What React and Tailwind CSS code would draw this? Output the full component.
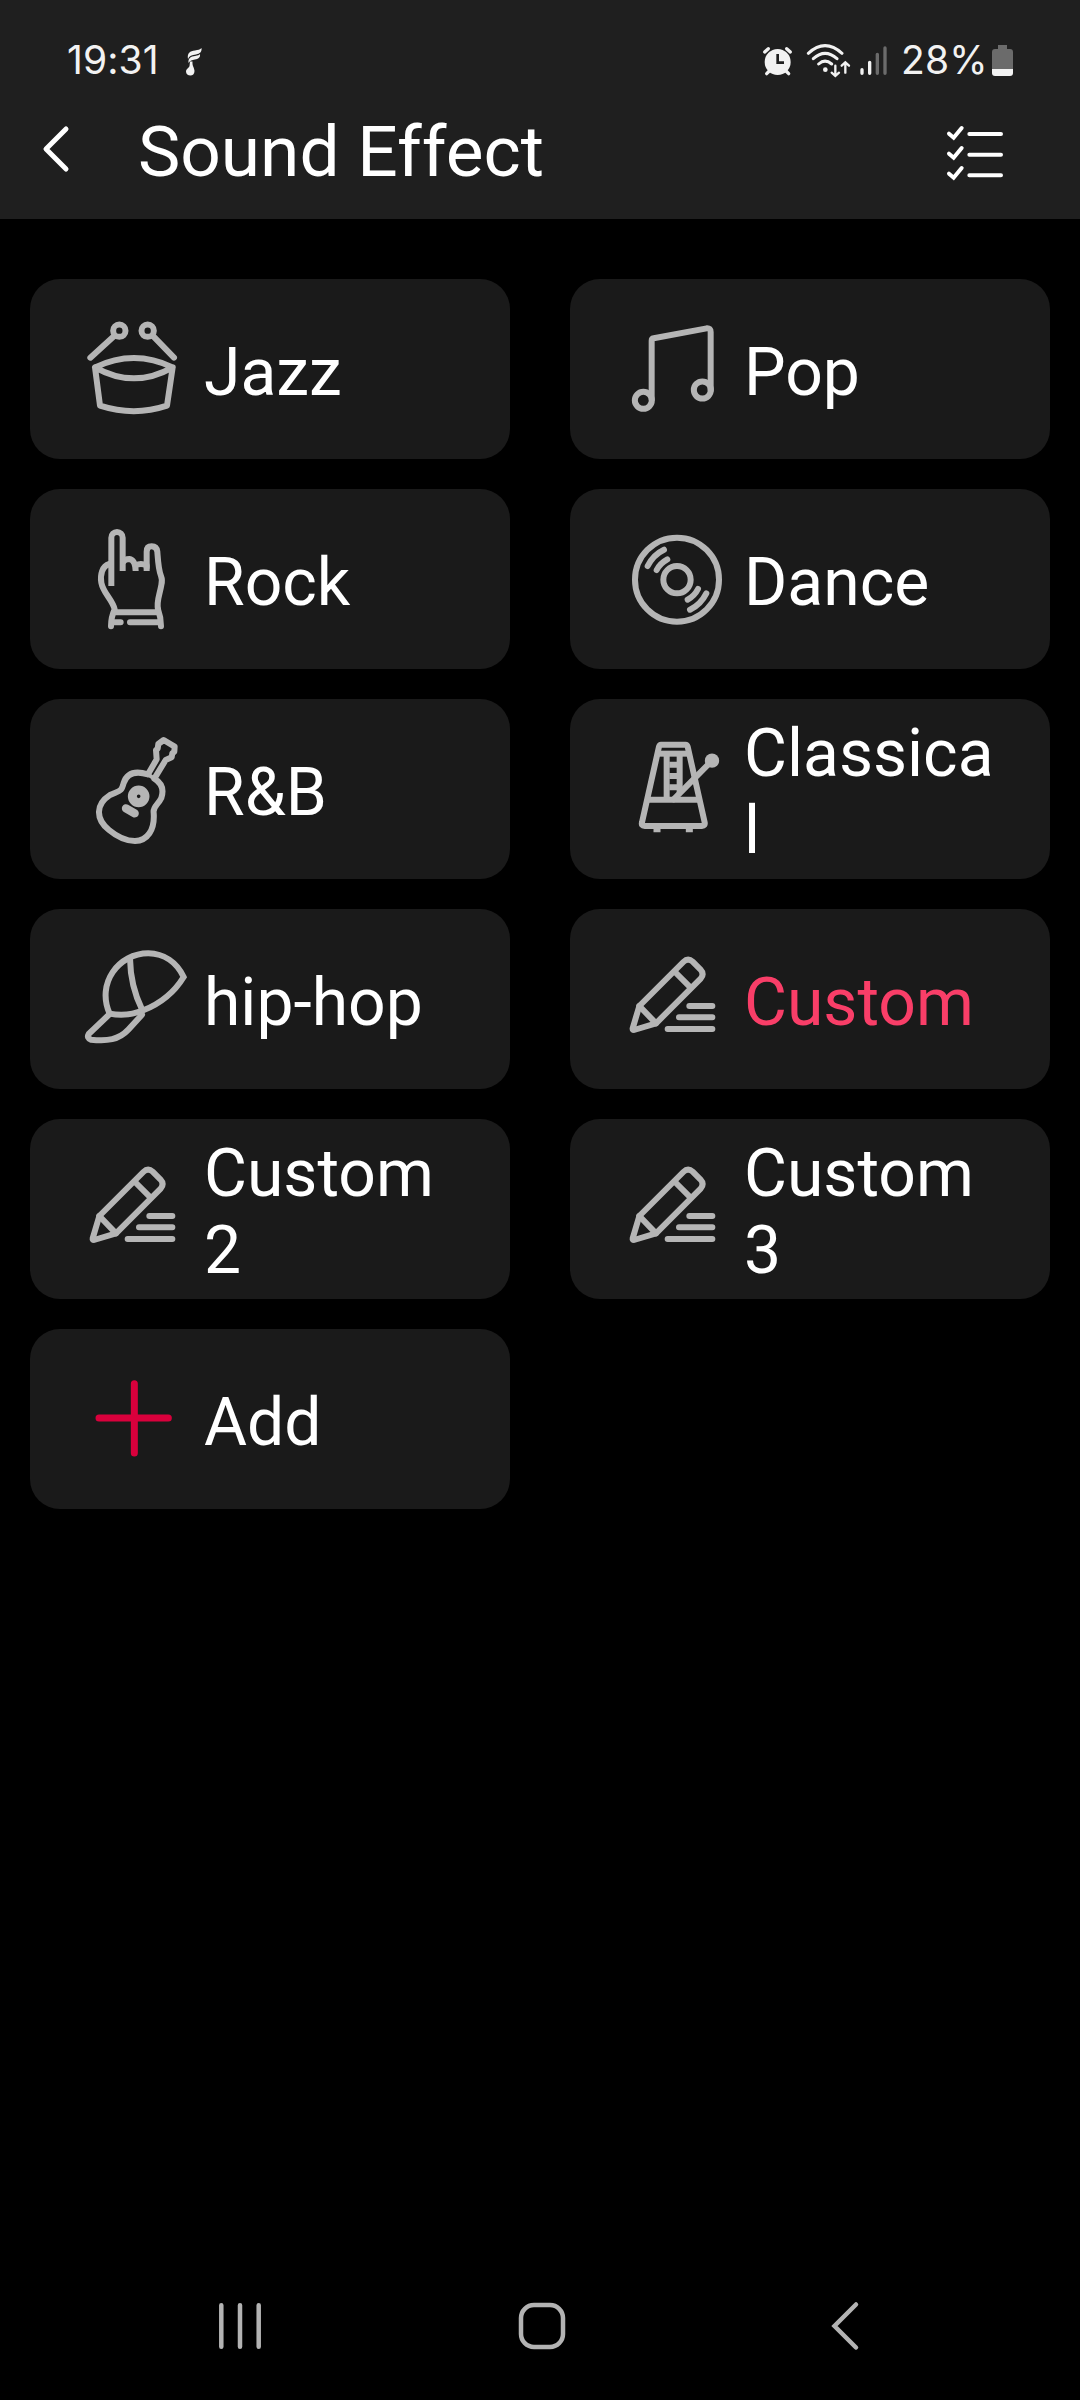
const PresetIcon = ({ children, className = "text-[#b5b5b5]" }) => (
    <svg
        viewBox="180 117 336 360"
        className={`w-[112px] h-[120px] shrink-0 ${className}`}
        fill="none"
        stroke="currentColor"
        strokeWidth="18"
        strokeLinecap="round"
        strokeLinejoin="round"
    >
        {children}
    </svg>
);

const DrumIcon = () => (
    <PresetIcon>
        <circle cx="298" cy="182" r="18.5" />
        <circle cx="383" cy="182" r="18.5" />
        <path d="M280 200 211 263M401 200l61 63" />
        <path d="M225 292Q342 236 458 292Q342 358 225 292L240 407Q342 440 441 407L458 292" />
    </PresetIcon>
);

const NoteIcon = () => (
    <PresetIcon>
        <path d="M275 388V212Q275 206 281 205L440 175Q452 174 452 186V360" />
        <circle cx="250" cy="391" r="25.5" />
        <circle cx="427" cy="360" r="25.5" />
    </PresetIcon>
);

const HornsIcon = () => (
    <PresetIcon>
        <path strokeLinecap="butt" d="M274 318V173a17 17 0 0 1 34 0V273" />
        <path strokeLinecap="butt" d="M308 248Q314 237 328 237Q346 240 347 273M347 256Q362 248 380 256V273" />
        <path d="M380 262V215Q380 199 395 199Q410 199 412 215C414 242 415 268 423 288Q428 300 424 315C419 345 409 362 414 388" />
        <path d="M268 252C246 258 240 285 244 308C250 340 277 358 284 388Q273 412 273 439M284 397H414M414 388Q423 412 423 439" />
        <path d="M278 427H302M330 427H418" />
    </PresetIcon>
);

const DiscIcon = () => (
    <PresetIcon>
        <circle cx="351" cy="299" r="126" />
        <circle cx="351" cy="299" r="41" />
        <path d="M263 258Q280 224 312 209M290 270Q300 250 322 238" />
        <path d="M439 340Q422 374 390 389M414 327Q404 347 383 359" />
    </PresetIcon>
);

const GuitarIcon = () => (
    <PresetIcon>
        <path d="M384 253 410 208 408 180 413 176 415 162 431 150 464 170 463 185 457 190 455 202 437 210 403 266C428 281 431 303 424 324C414 345 398 350 401 368C405 420 382 452 345 453C318 453 291 440 267 420C225 386 228 342 270 315C300 301 304 306 311 279C321 248 348 242 384 253" />
        <path d="M384 253 403 266" strokeWidth="12" />
        <circle cx="356" cy="319" r="19" strokeWidth="27" />
        <path d="M318 355 344 370" strokeWidth="25" />
    </PresetIcon>
);

const MetronomeIcon = () => (
    <PresetIcon>
        <path d="M303 164H377Q381 164 383 170L434 397Q436 408 426 408H254Q243 408 246 397L297 170Q299 164 303 164Z" />
        <path strokeLinecap="butt" d="M297 191H383" />
        <path strokeLinecap="butt" d="M264 329H420M328 224H352M328 258H352M328 292H352" />
        <path strokeLinecap="butt" d="M320 195V325M359 195V308" />
        <path d="M341 328 456 212" />
        <circle cx="456" cy="212" r="21.5" fill="currentColor" stroke="none" />
        <path strokeLinecap="butt" strokeWidth="21" d="M291 410V427M388 410V427" />
    </PresetIcon>
);

const CapIcon = () => (
    <PresetIcon>
        <path strokeLinejoin="miter" d="M269 341C228 250 296 160 385 160C432 161 470 187 491 231C463 277 420 311 370 331C336 345 300 347 269 341Z" />
        <path d="M330 176C331 230 341 278 366 328" />
        <path d="M269 342 206 402Q199 413 213 419C262 424 296 420 325 389L366 344" />
    </PresetIcon>
);

const PencilIcon = () => (
    <PresetIcon>
        <path d="M238 318 370 186Q384 172 398 185L421 208Q434 222 422 236L288 370 222 390Q217 390 218 385Z" />
        <path d="M238 318 288 370M345 216 391 262" />
        <path d="M388 318H457M357 352H457M323 387H457" />
    </PresetIcon>
);

const AddIcon = () => (
    <PresetIcon className="text-[#d9003c]">
        <path strokeWidth="21" d="M343 191V399M237 294H445" />
    </PresetIcon>
);

const presets = [
    { title: "Jazz", Icon: DrumIcon },
    { title: "Pop", Icon: NoteIcon },
    { title: "Rock", Icon: HornsIcon },
    { title: "Dance", Icon: DiscIcon },
    { title: "R&B", Icon: GuitarIcon },
    { title: "Classical", Icon: MetronomeIcon },
    { title: "hip-hop", Icon: CapIcon },
    { title: "Custom", Icon: PencilIcon, active: true },
    { title: "Custom 2", Icon: PencilIcon },
    { title: "Custom 3", Icon: PencilIcon },
    { title: "Add", Icon: AddIcon },
];

const StatusBar = () => (
    <div className="h-[120px] pl-[67px] pr-[67px] flex items-center justify-between text-[#f2f2f2] text-[39px] font-['Inter',sans-serif]">
        <div className="flex items-center">
            <span className="w-[119px] tracking-[0.1px]">19:31</span>
            <svg viewBox="0 0 16 28" className="w-4 h-7 mt-1" fill="currentColor">
                <path d="M2 11C1 5 4 3 9 2.500C12 2 14 1.500 15.500 0C16 4 14 5.500 10 6.500C6 7 3 8 2 11Z" />
                <path d="M2.500 15C2 10 5 8.500 9 8C12 7.500 13 7 14 6C14.500 10 12 11 9 11.500C6 12 4 12.500 2.500 15Z" />
                <path d="M4 13.500H6.500C6 18 8.500 20 8.500 23C8.500 26 6.500 27.500 4.500 27.500C2 27.500 0 26 0 23.500C0 21 3 20 3.500 18Z" />
            </svg>
        </div>
        <div className="flex items-center">
            {/* Alarm, wifi, signal */}
            <svg
                viewBox="60 60 390 120"
                className="w-[130px] h-10"
                fill="none"
                stroke="currentColor"
                strokeWidth="8"
                strokeLinecap="round"
            >
                <circle cx="113" cy="126" r="39" fill="currentColor" stroke="none" />
                <path strokeWidth="10" d="M74 96 85 86M151 96 140 86M80 161 88 153M146 161 138 153" />
                <path stroke="#1f1f1f" strokeWidth="8" strokeLinecap="butt" d="M113 102V128H132" />
                <path strokeWidth="9" d="M205 100Q255 54 306 100M220 116Q255 84 291 116M236 132Q255 115 275 132" />
                <circle cx="256" cy="149" r="7" fill="currentColor" stroke="none" />
                <path strokeWidth="7" d="M286 137V167M275 158 286 168 297 158M316 158V128M305 137 316 127 327 137" />
                <path strokeWidth="10" d="M366 149V160M389 127V160" />
                <path strokeWidth="10" stroke="#6b6b6b" d="M412 103V160M435 84V160" />
            </svg>
            <span className="w-[84px] ml-[11px] tracking-[0.2px]">28%</span>
            <svg viewBox="0 0 21 31" className="w-[21px] h-[31px] ml-[7px]">
                <path fill="#6b6b6b" d="M6 0H15V4H18Q21 4 21 7V24H0V7Q0 4 3 4H6Z" />
                <path fill="#f2f2f2" d="M0 24H21V28Q21 31 18 31H3Q0 31 0 28Z" />
            </svg>
        </div>
    </div>
);

const Header = () => (
    <header className="h-[219px] bg-[#1f1f1f]">
        <StatusBar />
        <div className="h-[62px] pl-[40px] pr-[75px] flex items-center">
            <svg viewBox="0 0 30 48" className="w-[30px] h-12 -mt-1" fill="none" stroke="white" strokeWidth="5" strokeLinecap="round" strokeLinejoin="round">
                <path d="M26 4 6 24 26 44" />
            </svg>
            <h1 className="ml-[68px] pt-[1px] text-[71.2px] leading-[84px]">Sound Effect</h1>
            <svg viewBox="615 312 180 174" className="w-[60px] h-[58px] ml-auto mt-1" fill="none" stroke="white" strokeWidth="12" strokeLinecap="round">
                <path d="M627 341 641 353 665 324M627 401 641 413 665 384M627 461 641 473 665 444" />
                <path d="M688 342H783M688 404H783M688 466H783" />
            </svg>
        </div>
    </header>
);

const PresetCard = ({ title, Icon, active }) => (
    <button className="h-[180px] pl-[50px] flex items-center rounded-[30px] bg-[#1a1a1a] text-left">
        <Icon />
        <span
            className={`w-[256px] ml-3 pt-[6px] text-[66px] leading-[77px] wrap-break-word ${
                active ? "text-[#f93e68]" : "text-white"
            }`}
        >
            {title}
        </span>
    </button>
);

const NavBar = () => (
    <nav className="h-[148px] flex items-center px-[214px] justify-between text-[#b3b3b3]">
        <svg viewBox="0 0 52 52" className="w-[52px] h-[52px]" fill="none" stroke="currentColor" strokeWidth="4.5" strokeLinecap="round">
            <path d="M7.300 5.300V46.700M26 5.300V46.700M44.700 5.300V46.700" />
        </svg>
        <svg viewBox="0 0 52 52" className="w-[52px] h-[52px] ml-[4px]" fill="none" stroke="currentColor" strokeWidth="4.500">
            <rect x="5" y="5" width="42" height="42" rx="13" />
        </svg>
        <svg viewBox="0 0 52 52" className="w-[52px] h-[52px]" fill="none" stroke="currentColor" strokeWidth="4.500" strokeLinecap="round">
            <path d="M42 4.500 20.500 26 42 47.500" />
        </svg>
    </nav>
);

export default function App() {
    return (
        <div className="w-[1080px] h-[2400px] flex flex-col bg-black text-white font-['Roboto',sans-serif]">
            <Header />
            <main className="flex-1 px-[30px] pt-[60px]">
                <div className="grid grid-cols-2 gap-x-[60px] gap-y-[30px]">
                    {presets.map((preset) => (
                        <PresetCard key={preset.title} {...preset} />
                    ))}
                </div>
            </main>
            <NavBar />
        </div>
    );
}
